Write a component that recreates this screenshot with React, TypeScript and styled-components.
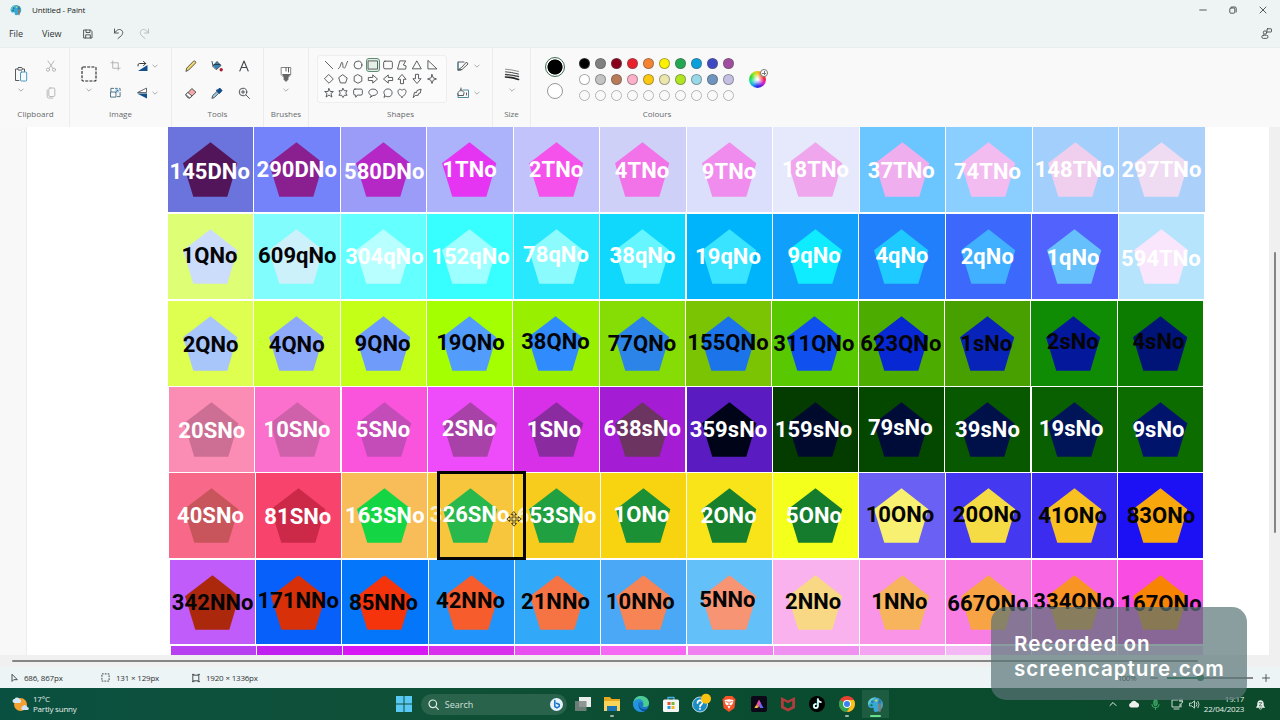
import React from 'react';
import styled, { createGlobalStyle } from 'styled-components';

const Global = createGlobalStyle`
  * { box-sizing: border-box; }
  html, body { margin: 0; padding: 0; background: #fff; overflow: hidden; }
  body { font-family: "Open Sans", "Noto Sans", sans-serif; font-size: 8px; color: #303434; }
`;

const Window = styled.div`
  position: relative;
  width: 1280px;
  height: 720px;
  display: flex;
  flex-direction: column;
  overflow: hidden;
  background: #f0f0f0;
`;
const Glyph = styled.svg`
  display: block;
  flex: none;
  overflow: visible;
`;
const Icon = ({ s = 12, v = 12, children, ...p }: any) => (
  <Glyph
    width={s}
    height={s}
    viewBox={`0 0 ${v} ${v}`}
    fill="none"
    stroke="#44484b"
    strokeWidth={0.9}
    strokeLinecap="round"
    strokeLinejoin="round"
    {...p}
  >
    {children}
  </Glyph>
);

/* Title and menu */
const Header = styled.header`
  height: 48px;
  flex: none;
  background: #eef4f4;
  border-bottom: 1px solid #e8eded;
`;
const TitleBar = styled.div`
  height: 20px;
  display: flex;
  align-items: center;
  padding-left: 10px;
`;
const Title = styled.span`
  margin-left: 10px;
  font-size: 8px;
  letter-spacing: -0.15px;
  color: #1c1e1e;
  line-height: 20px;
  flex: 1;
`;
const Controls = styled.div`
  display: flex;
  align-items: center;
  width: 81px;
  justify-content: space-between;
  padding-right: 13px;
`;
const MenuBar = styled.div`
  height: 27px;
  display: flex;
  align-items: center;
  padding-left: 9px;
`;
const MenuItem = styled.span<{ $w: number }>`
  width: ${(p) => p.$w}px;
  font-size: 9px;
  letter-spacing: -0.1px;
  line-height: 29px;
`;
const MenuIcon = styled.span<{ $w: number }>`
  width: ${(p) => p.$w}px;
  display: flex;
  justify-content: center;
`;
const Spacer = styled.span`flex: 1;`;

/* Ribbon */
const Ribbon = styled.div`
  height: 79px;
  flex: none;
  display: flex;
  background: #f9f9f9;
`;
const Section = styled.section<{ $w: number; $last?: boolean }>`
  width: ${(p) => p.$w}px;
  display: flex;
  flex-direction: column;
  border-right: ${(p) => (p.$last ? 'none' : '1px solid #ececec')};
  padding-top: 4px;
`;
const Tools = styled.div<{ $pad?: number }>`
  height: 54px;
  display: flex;
  padding-left: ${(p) => p.$pad || 0}px;
`;
const Caption = styled.div<{ $shift?: number }>`
  text-align: center;
  font-size: 8px;
  line-height: 16px;
  color: #666a6a;
  padding-left: ${(p) => p.$shift || 0}px;
`;
const Big = styled.div<{ $w: number }>`
  width: ${(p) => p.$w}px;
  display: flex;
  flex-direction: column;
  align-items: center;
  padding-top: 14px;
  gap: 5px;
`;
const Stack = styled.div<{ $w: number; $pl?: number }>`
  width: ${(p) => p.$w}px;
  padding-left: ${(p) => p.$pl || 0}px;
  display: grid;
  grid-template-rows: 27px 27px;
  place-items: center;
`;
const Chevron = () => (
  <Icon s={6} v={6} strokeWidth={0.8} stroke="#999"><path d="M.8 2 3 4.2 5.2 2" /></Icon>
);
const Gallery = styled.div`
  width: 130px;
  height: 48px;
  flex: none;
  margin: 3px 0 0 8px;
  padding: 2px 0 0 3.8px;
  border: 1px solid #eeeeee;
  border-radius: 3px;
  background: #fbfbfb;
  display: grid;
  grid-template-columns: repeat(8, 14.7px);
  grid-template-rows: repeat(3, 14.2px);
`;
const ShapeCell = styled.span<{ $on?: boolean }>`
  display: grid;
  place-items: center;
  width: 14px;
  height: 14px;
  border-radius: 3px;
  border: 1px solid ${(p) => (p.$on ? '#5d8a70' : 'transparent')};
  background: ${(p) => (p.$on ? '#e4efe8' : 'transparent')};
`;
const ActiveColours = styled.div`
  width: 45px;
  display: flex;
  flex-direction: column;
  align-items: center;
  padding: 5px 0 0 3px;
  gap: 6px;
`;
const Primary = styled.span`
  width: 20px;
  height: 20px;
  border-radius: 50%;
  border: 1px solid #3f6b53;
  background: radial-gradient(circle, #000 7.2px, #f9f9f9 7.9px);
`;
const Secondary = styled.span`
  width: 16px;
  height: 16px;
  border-radius: 50%;
  border: 1px solid #999;
  background: #fff;
`;
const Swatches = styled.div`
  width: 160px;
  display: grid;
  grid-template-columns: repeat(10, 16px);
  grid-template-rows: repeat(3, 16px);
  place-items: center;
  padding-top: 3px;
`;
const Swatch = styled.span<{ $c: string }>`
  width: 11px;
  height: 11px;
  border-radius: 50%;
  background: ${(p) => p.$c};
  border: 1px solid ${(p) => (p.$c === 'transparent' ? '#b4b4b4' : 'rgba(90,90,90,.5)')};
`;
const WheelCell = styled.div`
  width: 38px;
  padding: 19px 0 0 13px;
  display: flex;
`;
const Wheel = styled.span`
  width: 17px;
  height: 17px;
  flex: none;
  border-radius: 50%;
  background: radial-gradient(circle, #fff 5%, rgba(255,255,255,0) 55%),
    conic-gradient(#f5c520, #f55a20 40deg, #f02038 80deg, #e020c0 115deg, #6020e8 155deg, #2030e8 185deg, #20a8f0 220deg, #20e0a0 255deg, #30d838 290deg, #a5e820 330deg, #f5c520);
`;
const PlusBadge = styled.span`
  width: 8px;
  height: 8px;
  flex: none;
  margin: -2px 0 0 -6px;
  border-radius: 50%;
  border: 1px solid #777;
  background: linear-gradient(#777, #777) center / 4px 1px no-repeat, linear-gradient(#777, #777) center / 1px 4px no-repeat, #fff;
  z-index: 1;
`;

/* Canvas */
const Workspace = styled.main`
  height: 528px;
  flex: none;
  display: flex;
  background: #f8f8f8;
`;
const Paper = styled.div`
  position: relative;
  margin-left: 26px;
  width: 1243px;
  border-left: 1px solid #ececec;
  background: #fff;
  overflow: hidden;
`;
const VScroll = styled.div`
  flex: 1;
  background: #f0f0f0;
  padding: 125px 0 0 5px;
`;
const VThumb = styled.div`
  width: 2px;
  height: 281px;
  border-radius: 1px;
  background: #858585;
`;
const TileRow = styled.div<{ $x: number; $w: number; $h: number }>`
  display: grid;
  grid-template-columns: repeat(12, minmax(0, 1fr));
  column-gap: 1.1px;
  margin: 0 0 1.4px ${(p) => p.$x - 27}px;
  width: ${(p) => p.$w}px;
  height: ${(p) => p.$h}px;
`;
const Tile = styled.div<{ $bg: string }>`
  position: relative;
  background: ${(p) => p.$bg};
`;
const Penta = styled.svg`
  display: block;
  width: 85px;
  height: 84px;
`;
const Label = styled.span<{ $dark: boolean; $dx: number; $y: number }>`
  position: absolute;
  z-index: 1;
  left: ${(p) => p.$dx}px;
  top: ${(p) => p.$y}px;
  transform: translate(-50%, -50%);
  font: 700 22px/26px Roboto, sans-serif;
  letter-spacing: 0.05px;
  white-space: nowrap;
  color: ${(p) => (p.$dark ? '#050508' : '#fff')};
`;
const Faint = styled.span`opacity: 0.7;`;
const Selection = styled.div`
  position: absolute;
  z-index: 2;
  left: 410px;
  top: 344px;
  width: 89px;
  height: 89px;
  border: 3px solid #050505;
`;
const MoveCursor = styled.div`
  position: absolute;
  z-index: 3;
  left: 479px;
  top: 384px;
`;

type T = [string, string, string, number, number];
interface RowData { x: number; w: number; y: number; h: number; dark: (i: number) => boolean; tiles: T[] }
const rows: RowData[] = [
  { x: 168, w: 1036.5, y: 127, h: 85.4, dark: () => false, tiles: [
    ['145DNo', '#6a74dc', '#53155a', 209.7, 171], ['290DNo', '#7583fb', '#8a1f8f', 296.7, 169],
    ['580DNo', '#9a9cf8', '#b528c5', 384.2, 170.8], ['1TNo', '#adb3fa', '#e534f2', 469.5, 169],
    ['2TNo', '#c2c3fa', '#f552ec', 556, 169], ['4TNo', '#ced0f8', '#f273e8', 642, 170.3],
    ['9TNo', '#dcdffb', '#f08ced', 729, 171], ['18TNo', '#e6e9fb', '#efa6ed', 815.5, 169.4],
    ['37TNo', '#6bc5fe', '#efafef', 901.3, 169.6], ['74TNo', '#8acfff', '#f2bcf0', 987.5, 171.2],
    ['148TNo', '#a2cffb', '#f0cfee', 1074.5, 168.8], ['297TNo', '#abd1fb', '#efdcf2', 1161.5, 169.4]] },
  { x: 168, w: 1036, y: 214, h: 85.4, dark: (i) => i < 2, tiles: [
    ['1QNo', '#deff75', '#cbddfa', 209.5, 255.5], ['609qNo', '#81fdfe', '#ccf1fa', 297.3, 255.6],
    ['304qNo', '#64ffff', '#b8ffff', 384.4, 256.6], ['152qNo', '#38ffff', '#9dffff', 470.5, 256],
    ['78qNo', '#28e8fe', '#8cfbfe', 556, 254.2], ['38qNo', '#10d8fd', '#66f6ff', 642.5, 255.2],
    ['19qNo', '#00b4fc', '#38e4ff', 728, 256.6], ['9qNo', '#10a0fc', '#10ecff', 814.2, 255.5],
    ['4qNo', '#227ffc', '#1ecaff', 902, 255.5], ['2qNo', '#3c68fc', '#40b0ff', 987.3, 256.3],
    ['1qNo', '#5262fc', '#66c0fc', 1073, 256.9], ['594TNo', '#b5e4fc', '#f9e6fc', 1161, 258.8]] },
  { x: 168, w: 1035, y: 301, h: 85.2, dark: () => true, tiles: [
    ['2QNo', '#deff50', '#a9c6fa', 210.6, 344.3], ['4QNo', '#ceff32', '#8daafa', 296.7, 344.8],
    ['9QNo', '#c4ff18', '#6f9cfa', 382.5, 344], ['19QNo', '#a4ff00', '#529cfc', 470.5, 342.2],
    ['38QNo', '#98f000', '#308cfc', 555.5, 342], ['77QNo', '#86dc05', '#2c84e8', 642, 343.5],
    ['155QNo', '#7ac404', '#1c74ea', 728, 343], ['311QNo', '#58c800', '#1050ee', 813.8, 343.3],
    ['623QNo', '#4cac00', '#0828d4', 900.8, 343.3], ['1sNo', '#48a000', '#0824b8', 986.3, 343.8],
    ['2sNo', '#108c04', '#04189c', 1072.8, 342], ['4sNo', '#0c7c00', '#001478', 1158.5, 341.8]] },
  { x: 169, w: 1034, y: 387.6, h: 84.8, dark: () => false, tiles: [
    ['20SNo', '#fb8cb4', '#cd6f94', 211.8, 430.2], ['10SNo', '#fb70cc', '#cf61aa', 297, 429.3],
    ['5SNo', '#fb54dc', '#c34cb8', 383, 429.3], ['2SNo', '#ee4cfa', '#a942a8', 469, 428.8],
    ['1SNo', '#d830e8', '#8a2ca0', 554, 429.3], ['638sNo', '#a41cd4', '#6c3460', 642.3, 428.4],
    ['359sNo', '#5a1cc0', '#000418', 728.5, 429.2], ['159sNo', '#043c00', '#000a2c', 813.5, 429.2],
    ['79sNo', '#044800', '#000c38', 900.3, 427.9], ['39sNo', '#085800', '#001048', 987.5, 429.5],
    ['19sNo', '#086000', '#001458', 1071.2, 428.9], ['9sNo', '#0c6c00', '#00146c', 1158.5, 429.5]] },
  { x: 169.4, w: 1034, y: 473.8, h: 84.8, dark: (i) => i > 7, tiles: [
    ['40SNo', '#f86888', '#c8545c', 210.5, 515.3], ['81SNo', '#f8446c', '#cc2848', 297.8, 516.4],
    ['163SNo', '#f8bc58', '#14d644', 384.8, 515.6], ['326SNo', '#f8c63c', '#28b84c', 469.7, 515],
    ['653SNo', '#f8cc1c', '#20a040', 556.7, 515.1], ['1ONo', '#f8d410', '#1c9034', 641.5, 514.2],
    ['2ONo', '#f8e418', '#18802c', 728.7, 515.6], ['5ONo', '#f4ff1c', '#147c2c', 814, 515.1],
    ['10ONo', '#6a60f4', '#f8f070', 900, 515], ['20ONo', '#4438f0', '#f6dc44', 987.2, 515],
    ['41ONo', '#3c2cf0', '#f8c020', 1072.6, 516], ['83ONo', '#1c10f4', '#f8a80c', 1161, 515.8]] },
  { x: 170, w: 1033.4, y: 560, h: 84.8, dark: () => true, tiles: [
    ['342NNo', '#bf5cfa', '#ac280c', 212.7, 602.5], ['171NNo', '#0860fa', '#d83008', 298.3, 600.3],
    ['85NNo', '#0476fa', '#f6340c', 383.5, 603], ['42NNo', '#2094fa', '#f65c2c', 470.5, 600.3],
    ['21NNo', '#32a8f8', '#f67444', 555.5, 601.2], ['10NNo', '#4aa8f6', '#f68454', 640.3, 601.6],
    ['5NNo', '#64c0f8', '#f69474', 727.4, 599.6], ['2NNo', '#f9b2ee', '#f8d884', 813.2, 601.5],
    ['1NNo', '#f994e6', '#f8b45c', 899.4, 601.5], ['667ONo', '#f97ee4', '#f8a444', 988, 603.2],
    ['334ONo', '#f966e4', '#f89424', 1074, 601.5], ['167ONo', '#f94ce2', '#f88404', 1161, 603.2]] },
];
const lastRow = ['#b840f0', '#c020f0', '#d818f4', '#d830ec', '#e850f0', '#f468f4', '#f080f0', '#f090f0', '#f4a4f0', '#f4b8f4', '#f4c8f4', '#f4c8f4'];
const faint = ['326SNo', '653SNo'];

/* Bottom bars */
const HScroll = styled.div`
  height: 12px;
  flex: none;
  padding: 5px 0 0 12px;
  background: #f0f0f0;
`;
const HThumb = styled.div`
  width: 1186px;
  height: 2px;
  border-radius: 1px;
  background: #858585;
`;
const StatusBar = styled.footer`
  height: 21px;
  flex: none;
  display: flex;
  align-items: center;
  background: #edf4f6;
  padding-left: 10px;
`;
const Status = styled.span<{ $w: number }>`
  width: ${(p) => p.$w}px;
  display: flex;
  align-items: center;
  gap: 6px;
  font-size: 8px;
  letter-spacing: -0.2px;
  line-height: 22px;
  white-space: nowrap;
`;
const Zoom = styled.span`
  display: flex;
  align-items: center;
  gap: 9px;
  margin-left: auto;
  padding-right: 10px;
`;
const ZoomText = styled.span`
  font-size: 8px;
  letter-spacing: -0.5px;
  margin-right: 5px;
`;
const Track = styled.span`
  width: 86px;
  height: 2px;
  display: flex;
  align-items: center;
  background: linear-gradient(90deg, #157245 30px, #858585 30px);
`;
const Knob = styled.span`
  width: 7px;
  height: 7px;
  margin-left: 30px;
  border-radius: 50%;
  background: #157245;
`;
const Taskbar = styled.nav`
  height: 32px;
  flex: none;
  display: flex;
  align-items: center;
  background: linear-gradient(90deg, #0a5040, #0f5038 30%, #0a4c30 60%, #0b4a2a);
  color: #fff;
`;
const Weather = styled.div`
  width: 389.5px;
  padding-left: 12px;
  display: flex;
  align-items: center;
  gap: 4px;
`;
const Lines = styled.div<{ $right?: boolean }>`
  font-size: 8px;
  line-height: 10.5px;
  letter-spacing: -0.2px;
  color: #e4efeb;
  text-align: ${(p) => (p.$right ? 'right' : 'left')};
`;
const TaskItem = styled.span<{ $active?: boolean; $dot?: boolean }>`
  width: 29.35px;
  height: 28px;
  flex: none;
  display: grid;
  place-items: center;
  position: relative;
  background: ${(p) => (p.$active ? 'linear-gradient(90deg, transparent 1px, #1d5c40 1px, #1d5c40 28px, transparent 28px)' : 'none')};
  &::after {
    content: '';
    display: ${(p) => (p.$active || p.$dot ? 'block' : 'none')};
    position: absolute;
    bottom: 1px;
    width: ${(p) => (p.$active ? 11 : 4)}px;
    height: 2px;
    border-radius: 1px;
    background: ${(p) => (p.$active ? '#6be08c' : '#9db5aa')};
  }
`;
const SearchBox = styled.div`
  width: 146px;
  height: 21px;
  margin: 0 1px 0 2px;
  padding: 0 4px 0 7px;
  border-radius: 11px;
  background: #2a634c;
  display: flex;
  align-items: center;
  gap: 6px;
  font-size: 9px;
  color: #cfe0d9;
`;
const Tray = styled.div`
  margin-left: auto;
  display: flex;
  align-items: center;
  padding-right: 12px;
`;
const TrayItem = styled.span<{ $w: number }>`
  width: ${(p) => p.$w}px;
  display: grid;
  place-items: center;
`;
const Watermark = styled.aside`
  position: absolute;
  z-index: 10;
  left: 991px;
  top: 607px;
  width: 256px;
  height: 93px;
  border-radius: 15px;
  padding: 24px 0 0 23px;
  background: rgba(89, 116, 118, 0.7);
  color: #fff;
  font: 600 20.6px/25px Inter, "Open Sans", sans-serif;
  letter-spacing: 0.97px;
  white-space: nowrap;
`;

const Palette = ({ s = 16 }) => (
  <Icon s={s} v={16} stroke="none">
    <path d="M7 1.5C3 2 .5 5 1 8.5c.3 2.5 2.2 3 3.8 2.7 1-.2 1.7.4 1.5 1.5-.2 1.5.6 2.3 1.9 2.3 4-.2 6.8-3.4 6.8-7S11.5 1 7 1.5z" fill="#38a8d8" />
    <path d="M7 1.5C3 2 .5 5 1 8.5c2-.5 3-5 7.5-7z" fill="#60c8c8" />
    <circle cx="5" cy="5.5" r="1.2" fill="#2878a8" /><circle cx="8.7" cy="4.2" r="1.2" fill="#c0d060" /><circle cx="4.2" cy="8.7" r="1.1" fill="#1c7858" />
    <path d="M10.8 7h2.400v4l-.6 4h-1.200l-.6-4z" fill="#907860" /><path d="M10.500 7c0-2.500 1-3.500 1.500-4.500.8 1 1.500 2 1.500 4.500z" fill="#3078a0" />
  </Icon>
);

const shapes: React.ReactNode[] = [
  <path d="m1.500 1.500 8 8" />,
  <path d="M.5 9.500C3 9 3 2 4.500 2.500S4.500 9 6.500 9s2.500-5 4-7.500" />,
  <circle cx="5.500" cy="5.500" r="4.300" />,
  <rect x=".5" y="1" width="10" height="9" />,
  <rect x=".7" y="1.300" width="9.600" height="8.400" rx="1.500" />,
  <path d="M3.500 1h6l-2.500 4.500 3 1-.5 3.500H1z" />,
  <path d="M5.500 1.300 10.200 9.700H.8z" />,
  <path d="M1 .8v9h9.500z" />,
  <path d="m5.500.8 4.700 4.700-4.700 4.700L.8 5.500z" />,
  <path d="m5.500 1 4.600 3.400-1.700 5.400H2.600L.9 4.400z" />,
  <path d="m5.500.8 4.200 2.300v4.800l-4.200 2.300-4.200-2.300V3.100z" />,
  <path d="M.8 3.800h4.400V1l5.300 4.500L5.200 10V7.200H.8z" />,
  <path d="M10.200 3.800H5.800V1L.5 5.500 5.800 10V7.200h4.400z" />,
  <path d="M3.800 10.200V5.800H1L5.500.5 10 5.800H7.200v4.400z" />,
  <path d="M3.800.8v4.400H1l4.500 5.300L10 5.200H7.200V.8z" />,
  <path d="m5.500.6 1.300 3.600 3.600 1.300-3.600 1.300-1.300 3.600-1.300-3.600L.6 5.500l3.600-1.300z" />,
  <path d="m5.500.7 1.400 3.200h3.400L7.700 6l1 4-3.200-2.300L2.300 10l1-4L.7 3.900h3.400z" />,
  <path d="M5.500.5 7 3h3L8.500 5.500 10 8H7l-1.500 2.500L4 8H1l1.500-2.500L1 3h3z" />,
  <path d="M2.200 1.200h6.600q1.500 0 1.500 1.500v3.600q0 1.500-1.500 1.500H5L3 10.200V7.800h-.8Q.7 7.800.7 6.300V2.700q0-1.500 1.500-1.500z" />,
  <path d="M3.500 8.300C-1 6.300.5 1.200 5.500 1.200c6.500 0 6.500 7.100 0 7.100L2.700 10.200z" />,
  <path d="M1.200 10 2 7.700C-.5 4 2.300 1 5.500 1 11.500 1 11.500 9.700 5.500 9.700q-1.200 0-2-.6z" />,
  <path d="M5.500 10.200C-2.800 4.500 2.300-1.200 5.500 2.700 8.700-1.200 13.800 4.500 5.500 10.200z" />,
  <path d="m1.500 10.200 1.200-5.400L5 5l.5-2.200L10 1.200l-.9 4.300-2.100.8-.2 1.800H4z" />,
];
const swatches = [
  '#000', '#808080', '#88001b', '#e8202c', '#f58230', '#fdf000', '#22a850', '#08a0dc', '#3f48c4', '#a04ca0',
  '#fff', '#c3c3c3', '#b97a57', '#fdb0c8', '#fcc810', '#ebe6ac', '#b0e620', '#98d8e8', '#7094c0', '#c4c0e4',
  ...Array(10).fill('transparent'),
];

export default function App() {
  return (
    <Window>
      <Global />
      <Header>
        <TitleBar>
          <Palette s={12} />
          <Title>Untitled - Paint</Title>
          <Controls>
            <Icon s={8} v={8}><path d="M.7 4h6.600" /></Icon>
            <Icon s={8} v={8}><rect x=".8" y="2" width="5" height="5.200" rx="1" /><path d="M2.500 1h3.500q1.200 0 1.200 1.200V6" /></Icon>
            <Icon s={8} v={8}><path d="m1 1 6 6M7 1 1 7" /></Icon>
          </Controls>
        </TitleBar>
        <MenuBar>
          <MenuItem $w={33}>File</MenuItem>
          <MenuItem $w={30}>View</MenuItem>
          <MenuIcon $w={32}><Icon s={10} v={10}><path d="M1 1h6.500L9 2.500V9H1zM3 1v2.500h4V1M2.700 9V5.800h4.600V9" /></Icon></MenuIcon>
          <MenuIcon $w={28}><Icon s={11} v={11}><path d="M1.500 1v4h4M1.500 5C4 1.500 6 1 7.800 1.800 10.500 3 10 6 8.500 7.500L5 10.500" /></Icon></MenuIcon>
          <MenuIcon $w={25}><Icon s={11} v={11} stroke="#b4b8b8"><path d="M9.500 1v4h-4M9.500 5C7 1.500 5 1 3.200 1.800.5 3 1 6 2.500 7.500L6 10.500" /></Icon></MenuIcon>
          <Spacer />
          <MenuIcon $w={27}><Icon s={11} v={11}><rect x="6" y=".8" width="4.500" height="3.200" rx=".6" /><circle cx="4" cy="4.500" r="1.700" /><rect x=".8" y="7.200" width="6.200" height="3.200" rx="1.600" /></Icon></MenuIcon>
        </MenuBar>
      </Header>

      <Ribbon>
        <Section $w={70}>
          <Tools $pad={6}>
            <Big $w={30}>
              <Icon s={16} v={16}><path d="M6 14.500H2.500V3h9v2.500" /><rect x="4.800" y="1.500" width="4.500" height="2.600" rx="1" fill="#f9f9f9" /><rect x="7.500" y="6" width="6.200" height="9" rx="1" stroke="#3c8cb8" fill="#f4fafd" /></Icon>
              <Chevron />
            </Big>
            <Stack $w={29}>
              <Icon stroke="#b0b0b0"><path d="m3 1 5 7.500M9 1 4 8.500" /><circle cx="3" cy="9.700" r="1.600" /><circle cx="9" cy="9.700" r="1.600" /></Icon>
              <Icon stroke="#b0b0b0"><rect x="3.800" y="1" width="6" height="8.500" rx="1.200" /><path d="M2.200 3v6.500q0 1.600 1.600 1.600h4" /></Icon>
            </Stack>
          </Tools>
          <Caption $shift={2}>Clipboard</Caption>
        </Section>

        <Section $w={102}>
          <Tools $pad={4}>
            <Big $w={29}>
              <Icon s={16} v={16} strokeLinecap="butt" strokeWidth={1.100} stroke="#222"><rect x="1" y="1" width="14" height="14" rx="1" strokeDasharray="3 1.200" /></Icon>
              <Chevron />
            </Big>
            <Stack $w={24}>
              <Icon stroke="#a8a8a8" s={11}><path d="M3 1v8h8M1 3h8v8" /></Icon>
              <Icon s={11} stroke="#335c70"><path d="M1 5V1.500h3M6 1.500h2M10.500 1.500h.5V4M11 6v4.500H8" /><rect x="1" y="5.500" width="5.500" height="5.500" /><path d="m6 6 2.700-2.700M6.500 3.300h2.200v2.200" stroke="#1976b8" /></Icon>
            </Stack>
            <Stack $w={25} $pl={5}>
              <Icon><path d="M9.500 3.500H3.500Q1.500 3.500 2 6M7.500 1.300l2.200 2.200-2.200 2.200" stroke="#222" /><path d="M2 11h9.500V5z" fill="#12508c" stroke="none" /></Icon>
              <Icon><path d="M10.500 1.500v4H2z" fill="#fff" strokeWidth=".8" /><path d="M11 11.500V6.500H1z" fill="#12508c" stroke="none" /></Icon>
            </Stack>
            <Stack $w={6}><Chevron /><Chevron /></Stack>
          </Tools>
          <Caption>Image</Caption>
        </Section>

        <Section $w={92}>
          <Tools $pad={5}>
            <Stack $w={27}>
              <Icon><path d="m1 11 .8-3L8.500 1.200q1.200-.6 1.900.3.8.8 0 1.700L3.700 10z" fill="#f5d868" /></Icon>
              <Icon><path d="M1 7.800 6.800 1.500 11 5.200 5 11H3.500z" fill="#f5a8a8" /><path d="m1 7.800 3.800 3.200L7 9 3 5.600z" fill="#fff" /></Icon>
            </Stack>
            <Stack $w={26}>
              <Icon><path d="M2 6 6 1.500l4 4L5.500 9.500z" fill="#3884b0" /><path d="M2 5.800 1 1.500M3 4.500h6" stroke="#20344c" /><circle cx="10.200" cy="9.800" r="1.700" fill="#a82030" stroke="none" /></Icon>
              <Icon><path d="m1 11 .7-2.500L6 4.500l1.700 1.700-4.200 4.200z" fill="#9ccbe8" /><path d="m5.500 3.500 3 3L9.500 5.500l1.500-2L9 1.200 7 2.500z" fill="#104c88" stroke="#104c88" /></Icon>
            </Stack>
            <Stack $w={28}>
              <Icon strokeWidth={1.100}><path d="M1.800 11 6 1l4.200 10M3.200 7.500h5.600" /></Icon>
              <Icon><circle cx="5" cy="5" r="3.800" /><path d="m8 8 3.500 3.500M3.200 5h3.600M5 3.200v3.600" /></Icon>
            </Stack>
          </Tools>
          <Caption>Tools</Caption>
        </Section>

        <Section $w={45}>
          <Tools $pad={6}>
            <Big $w={31}>
              <Icon s={16} v={16}><path d="M3.500 1.500h9.200V9L10 11.500v2L8 15.500l-2-2v-2L3.500 9z" fill="#fff" stroke="#777" /><path d="M4 8h8.500L10 11.500v2L8 15.500l-2-2v-2z" fill="#666" stroke="none" /><path d="M8 2v3M10.500 2v4" /></Icon>
              <Chevron />
            </Big>
          </Tools>
          <Caption>Brushes</Caption>
        </Section>

        <Section $w={184}>
          <Tools>
            <Gallery>
              {shapes.map((s, i) => (
                <ShapeCell key={i} $on={i === 3}><Icon s={10} v={11} strokeWidth={0.95}>{s}</Icon></ShapeCell>
              ))}
            </Gallery>
            <Stack $w={27} $pl={5}>
              <Icon><path d="M7 2H1v8h3M1.200 10 5 9.500 11 4 9.500 2 5 7z" /><path d="M1 10V2" stroke="#39809c" /></Icon>
              <Icon><path d="M6 3h5.500v7.500H1V7" stroke="#39809c" /><path d="m1 5.500 3-3 3 3-.5 3h-5zM4 1v3M9.500 6v2" /></Icon>
            </Stack>
            <Stack $w={6}><Chevron /><Chevron /></Stack>
          </Tools>
          <Caption>Shapes</Caption>
        </Section>

        <Section $w={38}>
          <Tools $pad={4}>
            <Big $w={30}>
              <Icon s={16} v={16}><path d="M1.500 3.200q5 .2 13 2.200" strokeWidth=".6" /><path d="M1.500 5.800q5 .2 13 2.200" strokeWidth="1" /><path d="M1.500 8.500q5 .2 13 2" strokeWidth="1.300" /><path d="M1.500 11q6 .2 13 2.500" strokeWidth="1.700" stroke="#222" /></Icon>
              <Chevron />
            </Big>
          </Tools>
          <Caption>Size</Caption>
        </Section>

        <Section $w={251} $last>
          <Tools>
            <ActiveColours><Primary /><Secondary /></ActiveColours>
            <Swatches>{swatches.map((c, i) => <Swatch key={i} $c={c} />)}</Swatches>
            <WheelCell><Wheel /><PlusBadge /></WheelCell>
          </Tools>
          <Caption $shift={1}>Colours</Caption>
        </Section>
      </Ribbon>

      <Workspace>
        <Paper>
          {rows.map((r, ri) => (
            <TileRow key={ri} $x={r.x} $w={r.w} $h={r.h}>
              {r.tiles.map(([text, bg, fg, cx, cy], i) => {
                const left = r.x + (i * (r.w + 1.1)) / 12;
                return (
                  <Tile key={text} $bg={bg}>
                    <Penta viewBox="0 0 85 84"><path d="M42.500 15.300 69.300 36.300 59.300 69.700H25.300L15 36.300z" fill={fg} /></Penta>
                    <Label $dark={r.dark(i)} $dx={cx - left} $y={cy - r.y + 0.9}>
                      {faint.includes(text) ? <><Faint>{text[0]}</Faint>{text.slice(1)}</> : text}
                    </Label>
                  </Tile>
                );
              })}
            </TileRow>
          ))}
          <TileRow $x={170.5} $w={1033} $h={84}>
            {lastRow.map((c, i) => <Tile key={i} $bg={c} />)}
          </TileRow>
          <Selection />
          <MoveCursor>
            <Icon s={16} v={16} strokeWidth={0.9} stroke="#403818"><path d="m8 .8 2.500 2.700H9V7h3.500V5.500L15.200 8l-2.700 2.500V9H9v3.500h1.500L8 15.200l-2.500-2.700H7V9H3.500v1.500L.8 8l2.700-2.500V7H7V3.500H5.500z" fill="#f6d878" /></Icon>
          </MoveCursor>
        </Paper>
        <VScroll><VThumb /></VScroll>
      </Workspace>

      <HScroll><HThumb /></HScroll>
      <StatusBar>
        <Status $w={91}><Icon s={8} v={10} strokeWidth={1.200}><path d="M2.500.8v8.500l2.200-2.200h4z" /></Icon>686, 867px</Status>
        <Status $w={91}><Icon s={9} v={10} strokeWidth={1.100} strokeLinecap="butt"><rect x="1" y="1" width="8" height="8" strokeDasharray="2 1.200" /></Icon>131 × 129px</Status>
        <Status $w={91}><Icon s={8} v={10} strokeWidth={1.200}><rect x="1.500" y="1.500" width="7" height="7" /><path d="M.5.5h2M7.500.5h2M.5 9.500h2M7.500 9.500h2" /></Icon>1920 × 1336px</Status>
        <Zoom>
          <ZoomText>100%</ZoomText>
          <Icon s={8} v={8}><path d="M.5 4h7" /></Icon>
          <Track><Knob /></Track>
          <Icon s={8} v={8}><path d="M.5 4h7M4 .5v7" /></Icon>
        </Zoom>
      </StatusBar>

      <Taskbar>
        <Weather>
          <Icon s={17} v={17} stroke="none"><circle cx="8.500" cy="8.500" r="6.500" fill="#f4a030" /><path d="M2.500 7a2 2 0 0 1 0-4 3 3 0 0 1 5.300.3A1.900 1.900 0 0 1 7.500 7z" fill="#d5e8fa" /><path d="M10.500 14a2 2 0 0 1 .3-3.800 2.500 2.500 0 0 1 4.500.8 1.500 1.500 0 0 1 0 3z" fill="#d0e4f8" /></Icon>
          <Lines>17°C<br />Partly sunny</Lines>
        </Weather>
        <TaskItem><Icon s={16} v={16} stroke="none" fill="#58c8f4"><path d="M0 0h7.500v7.500H0zM8.500 0H16v7.500H8.500zM0 8.500h7.500V16H0zM8.500 8.500H16V16H8.500z" /></Icon></TaskItem>
        <SearchBox>
          <Icon s={11} v={11} stroke="#e4eee9" strokeWidth={1.200}><circle cx="4.800" cy="4.800" r="3.800" /><path d="m7.600 7.600 2.700 2.700" /></Icon>
          Search
          <Spacer />
          <Icon s={13} v={13} stroke="none"><circle cx="6.500" cy="6.500" r="6.500" fill="#e6f2fb" /><path d="M4.800 2.500v6l2.200 1.300 2.300-1.500V6.500L6.500 5.300" fill="none" stroke="#1474c8" strokeWidth="1.500" /></Icon>
        </SearchBox>
        <TaskItem><Icon s={16} v={16} stroke="none"><path d="M4 1h12v10H4z" fill="#e9eeec" /><path d="M0 5h11.500v10H0z" fill="#7b8784" opacity=".85" /></Icon></TaskItem>
        <TaskItem $dot><Icon s={16} v={16} stroke="none"><path d="M0 1h6l1.500 2H16v12H0z" fill="#e8a820" /><path d="M0 5h16v10H0z" fill="#fad458" /><path d="M3 10h10v5H3z" fill="#1a74b8" /></Icon></TaskItem>
        <TaskItem><Icon s={16} v={16} stroke="none"><circle cx="8" cy="8" r="8" fill="#1a78c8" /><path d="M.5 6C2 1 5-.2 8.500 0 13 .2 16.500 4 16 8c-.5 3-4 3.500-6.500 2.500C12 8 9.500 5 7 5 4 4.500 1.500 6 0 8z" fill="#4ccc90" /><path d="M.5 6C3 2 9 1.500 11 6.500 9 4 5 5 5 9c0 3 3 6 7 6-4 2-10.500.5-12-6z" fill="#2494dc" /><path d="M6 9c0 3 3 5.500 8.200 4-.8 1.200-1.500 1.700-2.200 2C8 15.500 5.500 12 6 9z" fill="#0c4c94" /></Icon></TaskItem>
        <TaskItem><Icon s={16} v={16} stroke="none"><path d="M5 4V1.500h6V4" stroke="#48b0e8" strokeWidth="1.300" /><rect y="3.500" width="16" height="12.500" rx="1.500" fill="#f4f6f6" /><path d="M4.500 6h3v3h-3z" fill="#e85030" /><path d="M8.500 6h3v3h-3z" fill="#78b830" /><path d="M4.500 10h3v3h-3z" fill="#2898e0" /><path d="M8.500 10h3v3h-3z" fill="#f4b820" /></Icon></TaskItem>
        <TaskItem><Icon s={18} v={18} stroke="none"><circle cx="9" cy="9.500" r="7.500" fill="#1c8cc4" stroke="#c8e4f0" /><path d="M6.500 8c0-3.500 5-3.500 5-.5 0 2-2.500 2-2.500 4M9 13.500v.5" stroke="#fff" strokeWidth="1.700" /><circle cx="15" cy="3.800" r="5" fill="#fcc010" /></Icon></TaskItem>
        <TaskItem><Icon s={16} v={16} stroke="none"><path d="M4.500 0h7l1.500 2 1.500 1-1 9L8 16l-5.500-4-1-9L3 2z" fill="#f45428" /><path d="m3.500 4 4.500-.7 4.500.7-1 4-2 2L8 13l-1.500-3-2-2z" fill="#fff" /><path d="m5 5.500 2 .8M11 5.500l-2 .8M8 6v3M6.500 9.500h3" stroke="#f45428" /></Icon></TaskItem>
        <TaskItem><Icon s={16} v={16} stroke="none"><rect width="16" height="16" rx="2" fill="#0c0818" /><path d="M3.500 12 8 4l2 3.500L7 12z" fill="#f06038" /><path d="m8 4 4.500 8H9L7 8z" fill="#6868f4" /><path d="m8 4-2 3.500 2 2 1.500-2.500z" fill="#e450b8" /><path d="M3.500 12 5 9.500l2 .5-1 2z" fill="#e8c840" /></Icon></TaskItem>
        <TaskItem><Icon s={16} v={16} stroke="none"><path d="m1 1 7 3.500L15 1v11l-7 3.500L1 12zM3.800 5v5.300L8 12.500l4.200-2.200V5L8 7.200z" fill="#b03c3c" fillRule="evenodd" /></Icon></TaskItem>
        <TaskItem><Icon s={16} v={16} stroke="none"><circle cx="8" cy="8" r="8" fill="#000" /><path d="M8.700 3v7a2 2 0 1 1-2-2M8.700 3.500q.7 2.500 3 2.700" stroke="#48e8e0" strokeWidth="1.700" /><path d="M9 3v7a2 2 0 1 1-2-2M9 3.500q.7 2.500 3 2.700" stroke="#fff" strokeWidth="1.300" /></Icon></TaskItem>
        <TaskItem $dot><Icon s={16} v={16} stroke="none"><circle cx="8" cy="8" r="8" fill="#e84234" /><path d="M8 8 1.100 4A8 8 0 0 0 8 16l3.500-6z" fill="#30a650" /><path d="M8 16A8 8 0 0 0 14.900 4H8v4l3.500 2z" fill="#fbc414" /><circle cx="8" cy="8" r="3.900" fill="#fff" /><circle cx="8" cy="8" r="3" fill="#3c80ee" /></Icon></TaskItem>
        <TaskItem $active><Palette s={17} /></TaskItem>
        <Tray>
          <TrayItem $w={16}><Icon s={8} v={8} stroke="#fff"><path d="m1 5.500 3-3 3 3" /></Icon></TrayItem>
          <TrayItem $w={26}><Icon s={12} stroke="none"><path d="M3 9.500a2.300 2.300 0 0 1-.2-4.500 3.200 3.200 0 0 1 6-.5A2.600 2.600 0 0 1 9.500 9.500z" fill="#eee" /></Icon></TrayItem>
          <TrayItem $w={17}><Icon s={11} stroke="#46b870" v={12}><rect x="4.200" y=".8" width="3.600" height="6.500" rx="1.800" fill="#2d8c52" /><path d="M2 6q0 3.500 4 3.500T10 6M6 9.500v2" /></Icon></TrayItem>
          <TrayItem $w={25}><Icon s={12} stroke="#dce8e2"><path d="M7 2H1v7h8V6M3 11h5M9 1v2M11 1v2M8.500 3h3v1.500L10 5.500V9" /></Icon></TrayItem>
          <TrayItem $w={7}><Icon s={11} stroke="#e4eee8"><path d="M1 4.500h2L6 2v8L3 7.500H1zM8 4q1.500 2 0 4M9.800 2.500q2.500 3.500 0 7" /></Icon></TrayItem>
          <TrayItem $w={56}><Lines $right>19:17<br />22/04/2023</Lines></TrayItem>
          <TrayItem $w={16}><Icon s={11} stroke="none"><path d="M1 9.500 2.500 7V5C2.500 0 9.500 0 9.500 5v2L11 9.500z" fill="#eef4f0" /><path d="M4.500 10.500q1.500 1.500 3 0" stroke="#eef4f0" /><path d="M4.500 4h3L4.500 7.500h3" stroke="#31664c" /></Icon></TrayItem>
        </Tray>
      </Taskbar>

      <Watermark>
        Recorded on<br />screencapture.com
      </Watermark>
    </Window>
  );
}
